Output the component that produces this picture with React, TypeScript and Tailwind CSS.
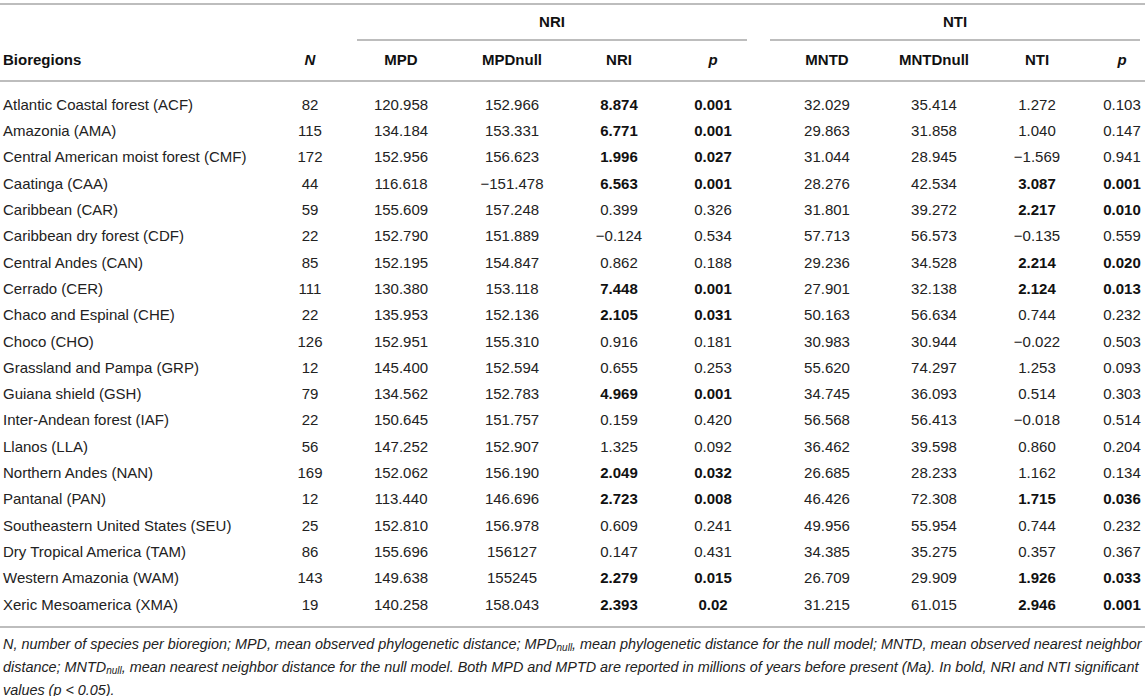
const rows: [string, string, string, string, [string, boolean], [string, boolean], string, string, [string, boolean], [string, boolean]][] = [
  ["Atlantic Coastal forest (ACF)", "82", "120.958", "152.966", ["8.874", true], ["0.001", true], "32.029", "35.414", ["1.272", false], ["0.103", false]],
  ["Amazonia (AMA)", "115", "134.184", "153.331", ["6.771", true], ["0.001", true], "29.863", "31.858", ["1.040", false], ["0.147", false]],
  ["Central American moist forest (CMF)", "172", "152.956", "156.623", ["1.996", true], ["0.027", true], "31.044", "28.945", ["\u22121.569", false], ["0.941", false]],
  ["Caatinga (CAA)", "44", "116.618", "\u2212151.478", ["6.563", true], ["0.001", true], "28.276", "42.534", ["3.087", true], ["0.001", true]],
  ["Caribbean (CAR)", "59", "155.609", "157.248", ["0.399", false], ["0.326", false], "31.801", "39.272", ["2.217", true], ["0.010", true]],
  ["Caribbean dry forest (CDF)", "22", "152.790", "151.889", ["\u22120.124", false], ["0.534", false], "57.713", "56.573", ["\u22120.135", false], ["0.559", false]],
  ["Central Andes (CAN)", "85", "152.195", "154.847", ["0.862", false], ["0.188", false], "29.236", "34.528", ["2.214", true], ["0.020", true]],
  ["Cerrado (CER)", "111", "130.380", "153.118", ["7.448", true], ["0.001", true], "27.901", "32.138", ["2.124", true], ["0.013", true]],
  ["Chaco and Espinal (CHE)", "22", "135.953", "152.136", ["2.105", true], ["0.031", true], "50.163", "56.634", ["0.744", false], ["0.232", false]],
  ["Choco (CHO)", "126", "152.951", "155.310", ["0.916", false], ["0.181", false], "30.983", "30.944", ["\u22120.022", false], ["0.503", false]],
  ["Grassland and Pampa (GRP)", "12", "145.400", "152.594", ["0.655", false], ["0.253", false], "55.620", "74.297", ["1.253", false], ["0.093", false]],
  ["Guiana shield (GSH)", "79", "134.562", "152.783", ["4.969", true], ["0.001", true], "34.745", "36.093", ["0.514", false], ["0.303", false]],
  ["Inter-Andean forest (IAF)", "22", "150.645", "151.757", ["0.159", false], ["0.420", false], "56.568", "56.413", ["\u22120.018", false], ["0.514", false]],
  ["Llanos (LLA)", "56", "147.252", "152.907", ["1.325", false], ["0.092", false], "36.462", "39.598", ["0.860", false], ["0.204", false]],
  ["Northern Andes (NAN)", "169", "152.062", "156.190", ["2.049", true], ["0.032", true], "26.685", "28.233", ["1.162", false], ["0.134", false]],
  ["Pantanal (PAN)", "12", "113.440", "146.696", ["2.723", true], ["0.008", true], "46.426", "72.308", ["1.715", true], ["0.036", true]],
  ["Southeastern United States (SEU)", "25", "152.810", "156.978", ["0.609", false], ["0.241", false], "49.956", "55.954", ["0.744", false], ["0.232", false]],
  ["Dry Tropical America (TAM)", "86", "155.696", "156127", ["0.147", false], ["0.431", false], "34.385", "35.275", ["0.357", false], ["0.367", false]],
  ["Western Amazonia (WAM)", "143", "149.638", "155245", ["2.279", true], ["0.015", true], "26.709", "29.909", ["1.926", true], ["0.033", true]],
  ["Xeric Mesoamerica (XMA)", "19", "140.258", "158.043", ["2.393", true], ["0.02", true], "31.215", "61.015", ["2.946", true], ["0.001", true]],
];

// column grid shared by header and body rows
const grid = "grid grid-cols-[270px_80px_106px_109px_100px_104px_110px_105px_94px_1fr] items-center";
// small nudges so each column's center sits where it does in the table
const pad = ["pl-[3px] text-left", "text-center", "text-center pr-[4px]", "text-center pl-[3px]", "text-center pl-[8px]", "text-center pr-[8px]", "text-center pl-[6px]", "text-center pl-[5px]", "text-center pl-[12px]", "text-center pl-[21px]"];

const Line = ({ className = "" }: { className?: string }) => <div className={`h-[2px] bg-[#bdbdbd] ${className}`} />;

export default function App() {
  return (
    <div className="w-[1145px] h-[696px] overflow-hidden bg-white text-[#222] font-['Liberation_Sans',Arial,sans-serif] text-[15px]">
      <div className="pt-[3px]">
        <Line />
        {/* group headings */}
        <div className="flex h-[34px] items-center font-bold text-[#111]">
          <div className="w-[357px]" />
          <div className="w-[390px] text-center">NRI</div>
          <div className="w-[23px]" />
          <div className="w-[370px] text-center">NTI</div>
        </div>
        <div className="flex">
          <div className="w-[357px]" />
          <Line className="w-[390px] h-[1.5px]" />
          <div className="w-[23px]" />
          <Line className="w-[370px] h-[1.5px]" />
        </div>
        <div className={`${grid} h-[39px] font-bold text-[#111]`}>
          <div className={pad[0]}>Bioregions</div>
          <div className={`${pad[1]} italic`}>N</div>
          <div className={pad[2]}>MPD</div>
          <div className={pad[3]}>MPDnull</div>
          <div className={pad[4]}>NRI</div>
          <div className={`${pad[5]} italic`}>p</div>
          <div className={pad[6]}>MNTD</div>
          <div className={pad[7]}>MNTDnull</div>
          <div className={pad[8]}>NTI</div>
          <div className={`${pad[9]} italic`}>p</div>
        </div>
        <Line />
        <div className="pt-[10px] pb-[8px]">
          {rows.map((r) => (
            <div key={r[0]} className={`${grid} h-[26.3px]`}>
              <div className={pad[0]}>{r[0]}</div>
              <div className={pad[1]}>{r[1]}</div>
              <div className={pad[2]}>{r[2]}</div>
              <div className={pad[3]}>{r[3]}</div>
              <div className={`${pad[4]} ${r[4][1] ? "font-bold text-[#111]" : ""}`}>{r[4][0]}</div>
              <div className={`${pad[5]} ${r[5][1] ? "font-bold text-[#111]" : ""}`}>{r[5][0]}</div>
              <div className={pad[6]}>{r[6]}</div>
              <div className={pad[7]}>{r[7]}</div>
              <div className={`${pad[8]} ${r[8][1] ? "font-bold text-[#111]" : ""}`}>{r[8][0]}</div>
              <div className={`${pad[9]} ${r[9][1] ? "font-bold text-[#111]" : ""}`}>{r[9][0]}</div>
            </div>
          ))}
        </div>
        <Line />
        <p className="pl-[3px] pt-[5px] italic text-[14.4px] leading-[22.8px]">
          N, number of species per bioregion; MPD, mean observed phylogenetic distance; MPD<sub className="text-[10px] leading-none">null</sub>, mean phylogenetic distance for the null model; MNTD, mean observed nearest neighbor distance; MNTD<sub className="text-[10px] leading-none">null</sub>, mean nearest neighbor distance for the null model. Both MPD and MPTD are reported in millions of years before present (Ma). In bold, NRI and NTI significant values (<span>p</span> &lt; 0.05).
        </p>
      </div>
    </div>
  );
}
